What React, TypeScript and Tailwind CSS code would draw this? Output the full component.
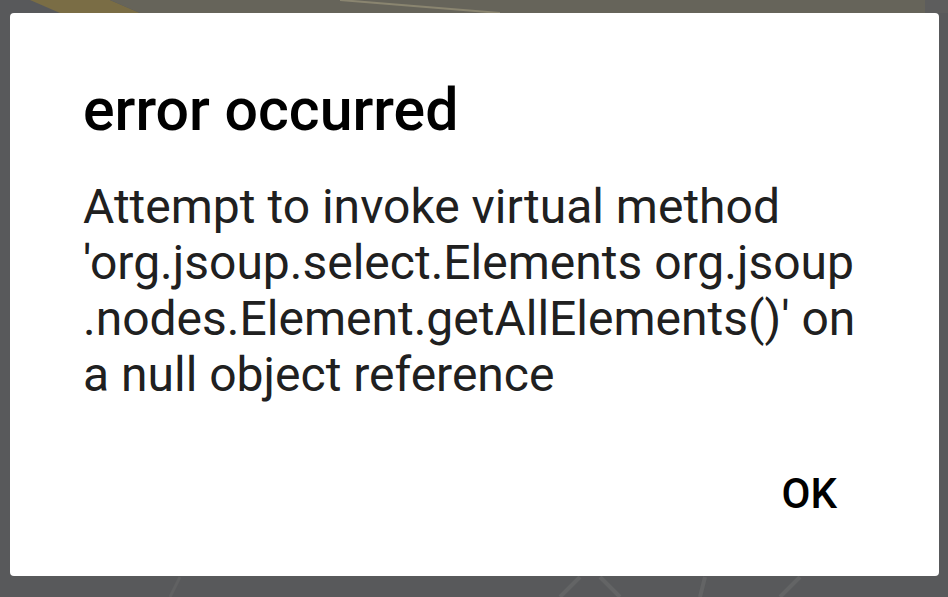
import React from "react";

export default function App() {
  return (
    <div className="relative w-[948px] h-[597px] overflow-hidden bg-[#58595b]" style={{ fontFamily: "Roboto, 'Noto Sans', sans-serif" }}>
      <svg className="absolute inset-0" width="948" height="597" viewBox="0 0 948 597">
        <polygon points="30,0 110,0 140,13 60,13" fill="#7a6d45" />
        <polygon points="110,0 948,0 948,13 140,13" fill="#66645a" />
        <polygon points="925,0 948,0 948,13 925,13" fill="#5d5d5d" />
        <line x1="340" y1="0" x2="500" y2="13" stroke="#8a8570" strokeWidth="2" />
        <line x1="170" y1="597" x2="180" y2="577" stroke="#606162" strokeWidth="3" />
        <line x1="560" y1="597" x2="580" y2="577" stroke="#636465" strokeWidth="4" />
        <line x1="620" y1="597" x2="600" y2="577" stroke="#636465" strokeWidth="4" />
        <line x1="700" y1="597" x2="705" y2="577" stroke="#636465" strokeWidth="4" />
        <line x1="780" y1="597" x2="800" y2="577" stroke="#636465" strokeWidth="4" />
      </svg>
      <div className="relative ml-[10px] mt-[13px] w-[929px] h-[563px] bg-white rounded-[4px] flex flex-col pl-[73px] pr-[40px] pt-[65px]">
        <div className="text-[59px] leading-[64px] font-medium text-black">error occurred</div>
        <div className="mt-[37px] text-[48px] leading-[56px] text-[#202020]">
          <div>Attempt to invoke virtual method</div>
          <div>'org.jsoup.select.Elements org.jsoup</div>
          <div>.nodes.Element.getAllElements()' on</div>
          <div>a null object reference</div>
        </div>
        <div className="mt-[67px] flex justify-end pr-[62px]">
          <div className="text-[42px] leading-[48px] font-medium text-black">OK</div>
        </div>
      </div>
    </div>
  );
}
